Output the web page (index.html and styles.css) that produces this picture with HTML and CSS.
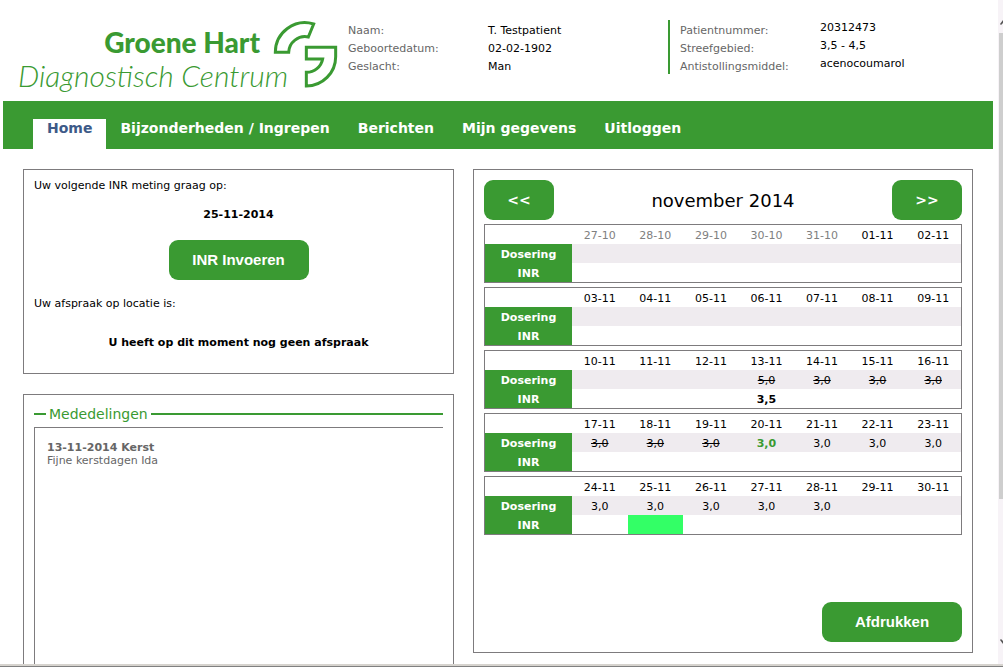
FILE: index.html
```html
<!DOCTYPE html>
<html lang="nl">
<head>
<meta charset="utf-8">
<title>Groene Hart Diagnostisch Centrum</title>
<link rel="stylesheet" href="styles.css">
</head>
<body>
<div class="frame">
  <div class="content">
    <header class="header">
      <svg class="logo" viewBox="0 0 322 80" role="img" aria-label="Groene Hart Diagnostisch Centrum">
        <text class="logo-bold" x="242" y="33" text-anchor="end">Groene Hart</text>
        <text class="logo-light" x="0" y="67">Diagnostisch Centrum</text>
        <g transform="translate(237 -10) scale(.33333)" fill="none" stroke="#3a9a32" stroke-width="9">
          <path d="M61 127A89 89 0 0 1 176 42L160 81A49 49 0 0 0 101 127Z"/>
          <path d="M154 112H242V140A88 88 0 0 1 154 228V187A49 49 0 0 0 203 147H154Z"/>
        </g>
      </svg>
      <dl class="facts">
        <dt>Naam:</dt><dd>T. Testpatient</dd>
        <dt>Geboortedatum:</dt><dd>02-02-1902</dd>
        <dt>Geslacht:</dt><dd>Man</dd>
      </dl>
      <dl class="facts facts-medical">
        <dt>Patientnummer:</dt><dd>20312473</dd>
        <dt>Streefgebied:</dt><dd>3,5 - 4,5</dd>
        <dt>Antistollingsmiddel:</dt><dd>acenocoumarol</dd>
      </dl>
    </header>

    <nav class="nav">
      <a class="active" href="#">Home</a>
      <a href="#">Bijzonderheden / Ingrepen</a>
      <a href="#">Berichten</a>
      <a href="#">Mijn gegevens</a>
      <a href="#">Uitloggen</a>
    </nav>

    <main class="main">
      <div class="column">
        <section class="panel appointment">
          <p>Uw volgende INR meting graag op:</p>
          <p class="notice">25-11-2014</p>
          <button class="button" type="button">INR Invoeren</button>
          <p>Uw afspraak op locatie is:</p>
          <p class="notice no-appointment">U heeft op dit moment nog geen afspraak</p>
        </section>
        <section class="panel messages">
          <h2 class="legend">Mededelingen</h2>
          <article class="message">
            <h3>13-11-2014 Kerst</h3>
            <p>Fijne kerstdagen Ida</p>
          </article>
        </section>
      </div>

      <section class="panel calendar">
        <div class="month">
          <button class="button button-step" type="button" aria-label="Vorige maand">&lt;&lt;</button>
          <h2>november 2014</h2>
          <button class="button button-step" type="button" aria-label="Volgende maand">&gt;&gt;</button>
        </div>
        <table class="week">
          <tr><td class="corner"></td><th class="other">27-10</th><th class="other">28-10</th><th class="other">29-10</th><th class="other">30-10</th><th class="other">31-10</th><th>01-11</th><th>02-11</th></tr>
          <tr class="dose"><th class="label" scope="row">Dosering</th><td></td><td></td><td></td><td></td><td></td><td></td><td></td></tr>
          <tr><th class="label" scope="row">INR</th><td></td><td></td><td></td><td></td><td></td><td></td><td></td></tr>
        </table>
        <table class="week">
          <tr><td class="corner"></td><th>03-11</th><th>04-11</th><th>05-11</th><th>06-11</th><th>07-11</th><th>08-11</th><th>09-11</th></tr>
          <tr class="dose"><th class="label" scope="row">Dosering</th><td></td><td></td><td></td><td></td><td></td><td></td><td></td></tr>
          <tr><th class="label" scope="row">INR</th><td></td><td></td><td></td><td></td><td></td><td></td><td></td></tr>
        </table>
        <table class="week">
          <tr><td class="corner"></td><th>10-11</th><th>11-11</th><th>12-11</th><th>13-11</th><th>14-11</th><th>15-11</th><th>16-11</th></tr>
          <tr class="dose"><th class="label" scope="row">Dosering</th><td></td><td></td><td></td><td><s>5,0</s></td><td><s>3,0</s></td><td><s>3,0</s></td><td><s>3,0</s></td></tr>
          <tr><th class="label" scope="row">INR</th><td></td><td></td><td></td><td><b>3,5</b></td><td></td><td></td><td></td></tr>
        </table>
        <table class="week">
          <tr><td class="corner"></td><th>17-11</th><th>18-11</th><th>19-11</th><th>20-11</th><th>21-11</th><th>22-11</th><th>23-11</th></tr>
          <tr class="dose"><th class="label" scope="row">Dosering</th><td><s>3,0</s></td><td><s>3,0</s></td><td><s>3,0</s></td><td class="today">3,0</td><td>3,0</td><td>3,0</td><td>3,0</td></tr>
          <tr><th class="label" scope="row">INR</th><td></td><td></td><td></td><td></td><td></td><td></td><td></td></tr>
        </table>
        <table class="week">
          <tr><td class="corner"></td><th>24-11</th><th>25-11</th><th>26-11</th><th>27-11</th><th>28-11</th><th>29-11</th><th>30-11</th></tr>
          <tr class="dose"><th class="label" scope="row">Dosering</th><td>3,0</td><td>3,0</td><td>3,0</td><td>3,0</td><td>3,0</td><td></td><td></td></tr>
          <tr><th class="label" scope="row">INR</th><td></td><td class="planned"></td><td></td><td></td><td></td><td></td><td></td></tr>
        </table>
        <button class="button print" type="button">Afdrukken</button>
      </section>
    </main>
  </div>
  <div class="scrollbar" aria-hidden="true">
    <svg class="arrow" viewBox="0 0 4 6"><path d="M1 5L4 1V4L2 6Z" fill="#555"/></svg>
    <div class="track"><div class="thumb"></div></div>
    <svg class="arrow" viewBox="0 0 4 6"><path d="M1 1L4 5V2L2 0Z" fill="#555"/></svg>
  </div>
</div>
</body>
</html>
```
FILE: styles.css
```css
* { box-sizing: border-box; }

body, p, h2, h3, dl, dd { margin: 0; }

body {
  background: #fff;
  color: #000;
  font: 11px/16px Verdana, "DejaVu Sans", sans-serif;
}

.frame {
  display: grid;
  grid-template-columns: 1fr 5px;
  grid-template-rows: 1fr;
  height: 100vh;
  border-bottom: 1px solid #808080;
  box-shadow: inset 0 -2px #d6d3ce;
  padding-bottom: 2px;
}

.content { overflow: hidden; }

.header {
  display: flex;
  align-items: flex-start;
  padding: 20px 0 0 18px;
}

.logo {
  flex: none;
  width: 322px;
  height: 80px;
  margin: 0 8px 1px 0;
  fill: #3a9a32;
  font-family: "Century Gothic", Lato, sans-serif;
}
.logo-bold { font-size: 28px; font-weight: 900; }
.logo-light { font-size: 30px; font-style: italic; font-weight: 300; }

.facts {
  display: grid;
  grid-template-columns: 140px 180px;
  line-height: 18px;
}
.facts dt { color: #666; padding-top: 2px; height: 18px; }
.facts dd { padding-top: 2px; height: 18px; }
.facts-medical {
  grid-template-columns: 140px 1fr;
  border-left: 2px solid #3a9a32;
  padding-left: 10px;
}
.facts-medical dd { margin-top: -3px; }

.nav {
  display: flex;
  align-items: flex-end;
  height: 48px;
  margin: 0 5px 0 3px;
  padding-left: 30px;
  background: #3a9a32;
}
.nav a {
  height: 30px;
  padding: 0 14px;
  color: #fff;
  font-size: 14px;
  font-weight: bold;
  line-height: 18px;
  text-decoration: none;
}
.nav .active { background: #fff; color: #3d5a88; }

.main {
  display: grid;
  grid-template-columns: 431fr 500fr;
  align-items: start;
  gap: 19px;
  padding: 20px 25px 20px 23px;
}
.column { display: grid; gap: 20px; }
.panel { border: 1px solid #7d7b7d; padding: 10px; }

.button {
  width: 140px;
  height: 40px;
  border: 0;
  border-radius: 9px;
  padding: 0;
  background: #3a9a32;
  color: #fff;
  font: bold 15px "Liberation Sans", Arial, sans-serif;
}

.appointment { display: flex; flex-direction: column; padding: 8px 10px 22px; }
.notice { margin: 13px 0 17px; text-align: center; font-weight: bold; }
.appointment .button { align-self: center; margin-bottom: 16px; padding-bottom: 2px; }
.no-appointment { margin: 23px 0 0; }

.messages { min-height: 300px; }
.legend {
  display: flex;
  align-items: center;
  gap: 3px;
  color: #3a9a32;
  font-size: 14px;
  font-weight: normal;
  line-height: 18px;
}
.legend::before, .legend::after { content: ""; height: 2px; background: #3a9a32; }
.legend::before { width: 12px; }
.legend::after { flex: 1; }
.message {
  min-height: 260px;
  margin-top: 4px;
  border: solid #7d7b7d;
  border-width: 1px 0 0 1px;
  padding: 13px 12px;
  color: #666;
  line-height: 13px;
}
.message h3 { font-size: 11px; }

.calendar { display: flex; flex-direction: column; gap: 4px; }
.month { display: flex; align-items: center; justify-content: space-between; }
.month h2 { padding-top: 2px; font-size: 18px; font-weight: normal; }
.button-step { width: 70px; font: bold 14px Verdana, "DejaVu Sans", sans-serif; }

.week {
  width: 100%;
  border: 1px solid #7d7b7d;
  border-spacing: 0;
  table-layout: fixed;
  text-align: center;
  line-height: 17px;
}
.week td, .week th { height: 19px; padding: 2px 0 0; font-weight: normal; }
.week .corner { width: 87px; }
.week .label { background: #3a9a32; color: #fff; font-weight: bold; }
.week .other { color: #808080; }
.week .today { color: #3a9a32; font-weight: bold; }
.week b { font-weight: bold; }
.week .planned { background: #33ff66; }
.dose { background: #efebef; }

.print { align-self: flex-end; margin-top: 63px; padding-bottom: 2px; }

.scrollbar {
  display: flex;
  flex-direction: column;
  justify-content: space-between;
  padding: 19px 0;
  background: #f7f3f7;
}
.arrow { width: 4px; height: 6px; margin-left: 1px; }
.track { flex: 1; padding: 8px 0; }
.thumb { height: 78%; margin-left: 1px; background: #cecece; }
```
